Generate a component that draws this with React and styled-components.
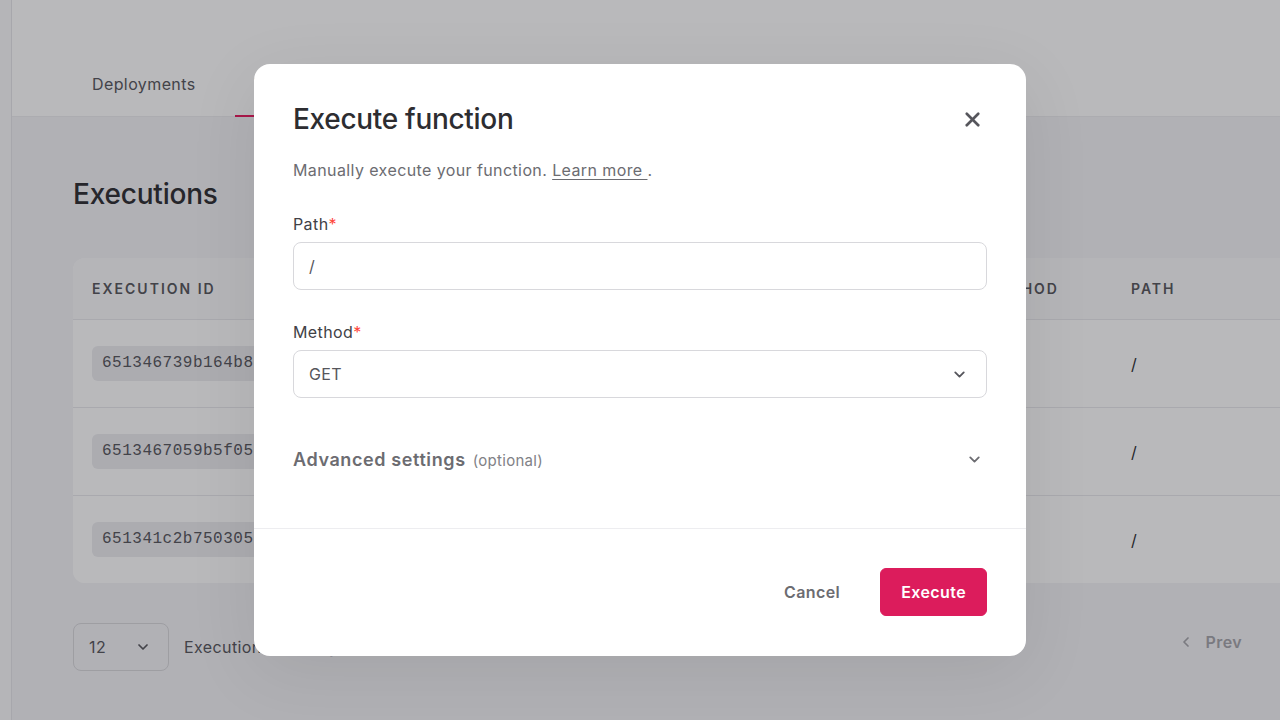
import React from "react";
import styled, { createGlobalStyle } from "styled-components";
import { X, ChevronDown, ChevronLeft } from "lucide-react";

const Global = createGlobalStyle`
  html, body { margin: 0; padding: 0; height: 100%; overflow: hidden; }
  body {
    font-family: Inter, "Noto Sans", "Liberation Sans", sans-serif;
    background: #f4f4f7;
    letter-spacing: 0.4px;
  }
  * { box-sizing: border-box; }
`;

const Page = styled.div`
  display: flex;
  width: 1280px;
  height: 720px;
  overflow: hidden;
  position: relative;
`;

const Sidebar = styled.aside`
  width: 12px;
  flex: none;
  background: #fafafb;
  border-right: 1px solid #e6e6ea;
`;

const Main = styled.main`
  flex: 1;
  display: flex;
  flex-direction: column;
  min-width: 0;
`;

const TopBar = styled.header`
  height: 117px;
  background: #ffffff;
  border-bottom: 1px solid #ececf0;
  display: flex;
  align-items: flex-end;
  padding-left: 61px;
`;

const Tabs = styled.nav`
  display: flex;
  gap: 20px;
`;

const Tab = styled.div`
  font-size: 16px;
  line-height: 22px;
  color: ${(p) => (p.$active ? "#2d2d31" : "#56565c")};
  padding: 0 19px 20px;
  border-bottom: 2px solid ${(p) => (p.$active ? "#e8185c" : "transparent")};
  margin-bottom: -1px;
`;

const Content = styled.section`
  padding: 60px 0 0 61px;
  display: flex;
  flex-direction: column;
`;

const Heading = styled.h1`
  margin: 0;
  font-size: 28px;
  line-height: 34px;
  font-weight: 500;
  color: #2d2d31;
  letter-spacing: -0.2px;
`;

const TableCard = styled.div`
  margin-top: 47px;
  width: 1260px;
  background: #ffffff;
  border-radius: 12px;
  overflow: hidden;
`;

const Row = styled.div`
  display: grid;
  grid-template-columns: 893px 146px 1fr;
  align-items: center;
  height: ${(p) => (p.$head ? "61px" : "88px")};
  border-top: ${(p) => (p.$first ? "none" : "1px solid #e8e8ec")};
  background: ${(p) => (p.$head ? "#fafafb" : "#ffffff")};
`;

const HeadCell = styled.div`
  padding-left: 19px;
  font-size: 14px;
  font-weight: 600;
  letter-spacing: 2px;
  color: #56565c;
  white-space: nowrap;
`;

const Cell = styled.div`
  padding-left: 19px;
  font-size: 16px;
  color: #2d2d31;
  white-space: nowrap;
`;

const IdPill = styled.span`
  display: inline-block;
  background: #ececf0;
  border-radius: 6px;
  padding: 6px 10px;
  font-family: "Liberation Mono", "DejaVu Sans Mono", monospace;
  font-size: 16px;
  letter-spacing: 0.5px;
  line-height: 23px;
  color: #56565c;
`;

const Pagination = styled.div`
  margin-top: 40px;
  display: flex;
  align-items: center;
  width: 1169px;
`;

const LimitSelect = styled.div`
  width: 96px;
  height: 48px;
  border: 1px solid #d8d8dc;
  border-radius: 8px;
  display: flex;
  align-items: center;
  justify-content: space-between;
  padding: 0 17px 0 15px;
  font-size: 16px;
  color: #56565c;
`;

const PerPage = styled.span`
  margin-left: 15px;
  font-size: 16px;
  color: #56565c;
`;

const Prev = styled.div`
  margin-left: auto;
  margin-bottom: 10px;
  display: flex;
  align-items: center;
  gap: 12px;
  font-size: 16px;
  font-weight: 600;
  color: #a5a5ab;
`;

const Overlay = styled.div`
  position: absolute;
  inset: 0;
  background: rgba(22, 22, 30, 0.3);
  display: flex;
  align-items: center;
  justify-content: center;
`;

const Modal = styled.div`
  width: 772px;
  height: 592px;
  background: #ffffff;
  border-radius: 16px;
  box-shadow: 0 16px 70px rgba(0, 0, 0, 0.08);
  display: flex;
  flex-direction: column;
`;

const ModalBody = styled.div`
  padding: 39px 39px 0 39px;
  flex: 1;
  display: flex;
  flex-direction: column;
`;

const TitleRow = styled.div`
  display: flex;
  align-items: center;
  justify-content: space-between;
  height: 32px;
`;

const Title = styled.h2`
  margin: 0;
  font-size: 28px;
  line-height: 32px;
  font-weight: 500;
  color: #2d2d31;
  letter-spacing: -0.3px;
`;

const CloseButton = styled.button`
  border: none;
  background: none;
  padding: 0;
  width: 24px;
  height: 24px;
  margin-right: 3px;
  display: flex;
  align-items: center;
  justify-content: center;
  color: #56565c;
  cursor: pointer;
`;

const Description = styled.p`
  margin: 23px 0 0;
  font-size: 16px;
  line-height: 24px;
  color: #6c6c71;
`;

const Link = styled.a`
  color: #6c6c71;
  text-decoration: underline;
  text-underline-offset: 3px;
`;

const Field = styled.div`
  margin-top: 31px;
  display: flex;
  flex-direction: column;
  gap: 7px;
`;

const Label = styled.label`
  font-size: 16px;
  line-height: 22px;
  color: #414146;
`;

const Required = styled.span`
  color: #ff453a;
`;

const InputBox = styled.div`
  height: 48px;
  border: 1px solid #d8d8dc;
  border-radius: 8px;
  display: flex;
  align-items: center;
  justify-content: space-between;
  padding: 0 18px 0 15px;
  font-size: 16px;
  color: #56565c;
`;

const Advanced = styled.div`
  margin-top: 47px;
  height: 28px;
  display: flex;
  align-items: center;
  justify-content: space-between;
  padding-right: 4px;
  color: #6c6c71;
`;

const AdvTitle = styled.span`
  font-size: 18px;
  font-weight: 600;
  letter-spacing: 0.6px;
  color: #6c6c71;
`;

const Optional = styled.span`
  margin-left: 7px;
  font-size: 15px;
  font-weight: 400;
  letter-spacing: 0.3px;
  color: #818186;
`;

const Footer = styled.div`
  border-top: 1px solid #ededf0;
  padding: 39px 39px 40px;
  display: flex;
  justify-content: flex-end;
  align-items: center;
  gap: 40px;
`;

const TextButton = styled.button`
  border: none;
  background: none;
  font-family: inherit;
  letter-spacing: inherit;
  font-size: 16px;
  font-weight: 600;
  color: #6c6c71;
  padding: 0;
  cursor: pointer;
`;

const PrimaryButton = styled.button`
  height: 48px;
  padding: 0 20px;
  border: 1px solid #dc1c5c;
  border-radius: 6px;
  background: #dc1c5c;
  color: #ffffff;
  font-family: inherit;
  letter-spacing: inherit;
  font-size: 16px;
  font-weight: 600;
  cursor: pointer;
`;

const rows = [
  "651346739b164b8e2a1f",
  "6513467059b5f05c7d3a",
  "651341c2b750305e9b12",
];

export default function App() {
  return (
    <>
      <Global />
      <Page>
        <Sidebar />
        <Main>
          <TopBar>
            <Tabs>
              <Tab>Deployments</Tab>
              <Tab $active>Executions</Tab>
            </Tabs>
          </TopBar>
          <Content>
            <Heading>Executions</Heading>
            <TableCard>
              <Row $head $first>
                <HeadCell>EXECUTION ID</HeadCell>
                <HeadCell>METHOD</HeadCell>
                <HeadCell>PATH</HeadCell>
              </Row>
              {rows.map((id) => (
                <Row key={id}>
                  <Cell>
                    <IdPill>{id}</IdPill>
                  </Cell>
                  <Cell>GET</Cell>
                  <Cell>/</Cell>
                </Row>
              ))}
            </TableCard>
            <Pagination>
              <LimitSelect>
                12
                <ChevronDown size={16} strokeWidth={2.6} />
              </LimitSelect>
              <PerPage>Executions per page</PerPage>
              <Prev>
                <ChevronLeft size={16} strokeWidth={2.6} />
                Prev
              </Prev>
            </Pagination>
          </Content>
        </Main>
        <Overlay>
          <Modal>
            <ModalBody>
              <TitleRow>
                <Title>Execute function</Title>
                <CloseButton aria-label="Close">
                  <X size={23} strokeWidth={2.8} />
                </CloseButton>
              </TitleRow>
              <Description>
                Manually execute your function. <Link href="#">Learn more </Link>.
              </Description>
              <Field>
                <Label>
                  Path<Required>*</Required>
                </Label>
                <InputBox>/</InputBox>
              </Field>
              <Field>
                <Label>
                  Method<Required>*</Required>
                </Label>
                <InputBox>
                  GET
                  <ChevronDown size={17} strokeWidth={2.6} />
                </InputBox>
              </Field>
              <Advanced>
                <AdvTitle>
                  Advanced settings<Optional>(optional)</Optional>
                </AdvTitle>
                <ChevronDown size={17} strokeWidth={2.6} />
              </Advanced>
            </ModalBody>
            <Footer>
              <TextButton>Cancel</TextButton>
              <PrimaryButton>Execute</PrimaryButton>
            </Footer>
          </Modal>
        </Overlay>
      </Page>
    </>
  );
}
